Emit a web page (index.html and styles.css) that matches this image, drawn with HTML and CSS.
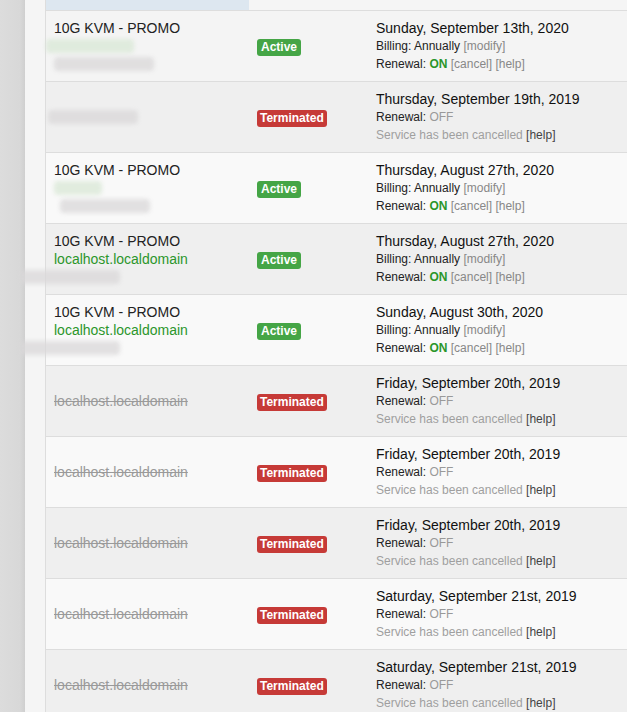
FILE: index.html
```html
<!DOCTYPE html>
<html>
<head>
<meta charset="utf-8">
<link rel="stylesheet" href="styles.css">
</head>
<body>
<div class="page">
  <div class="gutter"></div>
  <div class="side"></div>
  <div class="table">
    <div class="head"><div class="hcell"></div><div></div><div></div></div>

    <div class="row odd first">
      <div class="cell name">
        <div class="title">10G KVM - PROMO</div>
        <div class="line"><span class="blob green w88"></span></div>
        <div class="line"><span class="blob grey w100"></span></div>
      </div>
      <div class="cell status"><span class="badge active">Active</span></div>
      <div class="cell info">
        <div class="date">Sunday, September 13th, 2020</div>
        <div class="small">Billing: Annually <span class="lnk">[modify]</span></div>
        <div class="small">Renewal: <b class="on">ON</b> <span class="lnk">[cancel]</span> <span class="lnk">[help]</span></div>
      </div>
    </div>

    <div class="row even">
      <div class="cell name"><span class="blob grey w90"></span></div>
      <div class="cell status"><span class="badge term">Terminated</span></div>
      <div class="cell info">
        <div class="date">Thursday, September 19th, 2019</div>
        <div class="small">Renewal: <span class="off">OFF</span></div>
        <div class="small"><span class="muted">Service has been cancelled</span> <span class="help">[help]</span></div>
      </div>
    </div>

    <div class="row odd">
      <div class="cell name">
        <div class="title">10G KVM - PROMO</div>
        <div class="line"><span class="blob green w50"></span></div>
        <div class="line"><span class="blob grey w90 ind"></span></div>
      </div>
      <div class="cell status"><span class="badge active">Active</span></div>
      <div class="cell info">
        <div class="date">Thursday, August 27th, 2020</div>
        <div class="small">Billing: Annually <span class="lnk">[modify]</span></div>
        <div class="small">Renewal: <b class="on">ON</b> <span class="lnk">[cancel]</span> <span class="lnk">[help]</span></div>
      </div>
    </div>

    <div class="row even">
      <div class="cell name">
        <div class="title">10G KVM - PROMO</div>
        <div class="domain">localhost.localdomain</div>
        <div class="line"><span class="blob grey w70 out"></span></div>
      </div>
      <div class="cell status"><span class="badge active">Active</span></div>
      <div class="cell info">
        <div class="date">Thursday, August 27th, 2020</div>
        <div class="small">Billing: Annually <span class="lnk">[modify]</span></div>
        <div class="small">Renewal: <b class="on">ON</b> <span class="lnk">[cancel]</span> <span class="lnk">[help]</span></div>
      </div>
    </div>

    <div class="row odd">
      <div class="cell name">
        <div class="title">10G KVM - PROMO</div>
        <div class="domain">localhost.localdomain</div>
        <div class="line"><span class="blob grey w100 out"></span></div>
      </div>
      <div class="cell status"><span class="badge active">Active</span></div>
      <div class="cell info">
        <div class="date">Sunday, August 30th, 2020</div>
        <div class="small">Billing: Annually <span class="lnk">[modify]</span></div>
        <div class="small">Renewal: <b class="on">ON</b> <span class="lnk">[cancel]</span> <span class="lnk">[help]</span></div>
      </div>
    </div>

    <div class="row even">
      <div class="cell name"><span class="strike">localhost.localdomain</span></div>
      <div class="cell status"><span class="badge term">Terminated</span></div>
      <div class="cell info">
        <div class="date">Friday, September 20th, 2019</div>
        <div class="small">Renewal: <span class="off">OFF</span></div>
        <div class="small"><span class="muted">Service has been cancelled</span> <span class="help">[help]</span></div>
      </div>
    </div>

    <div class="row odd">
      <div class="cell name"><span class="strike">localhost.localdomain</span></div>
      <div class="cell status"><span class="badge term">Terminated</span></div>
      <div class="cell info">
        <div class="date">Friday, September 20th, 2019</div>
        <div class="small">Renewal: <span class="off">OFF</span></div>
        <div class="small"><span class="muted">Service has been cancelled</span> <span class="help">[help]</span></div>
      </div>
    </div>

    <div class="row even">
      <div class="cell name"><span class="strike">localhost.localdomain</span></div>
      <div class="cell status"><span class="badge term">Terminated</span></div>
      <div class="cell info">
        <div class="date">Friday, September 20th, 2019</div>
        <div class="small">Renewal: <span class="off">OFF</span></div>
        <div class="small"><span class="muted">Service has been cancelled</span> <span class="help">[help]</span></div>
      </div>
    </div>

    <div class="row odd">
      <div class="cell name"><span class="strike">localhost.localdomain</span></div>
      <div class="cell status"><span class="badge term">Terminated</span></div>
      <div class="cell info">
        <div class="date">Saturday, September 21st, 2019</div>
        <div class="small">Renewal: <span class="off">OFF</span></div>
        <div class="small"><span class="muted">Service has been cancelled</span> <span class="help">[help]</span></div>
      </div>
    </div>

    <div class="row even">
      <div class="cell name"><span class="strike">localhost.localdomain</span></div>
      <div class="cell status"><span class="badge term">Terminated</span></div>
      <div class="cell info">
        <div class="date">Saturday, September 21st, 2019</div>
        <div class="small">Renewal: <span class="off">OFF</span></div>
        <div class="small"><span class="muted">Service has been cancelled</span> <span class="help">[help]</span></div>
      </div>
    </div>
  </div>
</div>
</body>
</html>
```

FILE: styles.css
```css
html, body {
  margin: 0;
  padding: 0;
  overflow: hidden;
  background: #f5f5f5;
  font-family: "Liberation Sans", Arial, sans-serif;
}

.page {
  display: flex;
  min-height: 712px;
}

.gutter {
  width: 25px;
  flex: none;
  background: linear-gradient(to right, #dcdcdc 0%, #d8d8d8 80%, #cfcfcf 100%);
}

.side {
  width: 20px;
  flex: none;
  background: #f5f5f5;
}

.table {
  flex: 1;
  border-left: 1px solid #dddddd;
  background: #f9f9f9;
}

.head {
  display: grid;
  grid-template-columns: 203px 119px 1fr;
  height: 10px;
  background: #f5f5f5;
}

.hcell {
  background: #dde7f0;
}

.row {
  display: grid;
  grid-template-columns: 203px 119px 1fr;
  border-top: 1px solid #dddddd;
}

.row.odd { background: #f9f9f9; }
.row.even { background: #efefef; }
.row.first { background: #f4f4f4; }

.cell {
  padding: 8px;
  display: flex;
  flex-direction: column;
  justify-content: center;
  min-height: 54px;
}

.name { font-size: 14px; line-height: 18px; color: #222; }

.title { height: 18px; }

.domain { height: 18px; color: #2b962b; }

.line { height: 18px; display: flex; align-items: center; }

.blob {
  display: block;
  height: 14px;
  border-radius: 4px;
  filter: blur(2px);
  opacity: 0.75;
}

.blob.green { background: #d9e8d6; }
.blob.grey { background: #dad8d9; }
.w50 { width: 48px; }
.w70 { width: 100px; }
.w88 { width: 88px; margin-left: -8px; }
.w90 { width: 90px; margin-left: -6px; }
.w100 { width: 100px; }
.ind { margin-left: 6px; }
.out { margin-left: -34px; }

.strike {
  color: #9a9a9a;
  text-decoration: line-through;
}

.status { align-items: flex-start; }

.badge {
  display: inline-block;
  font-size: 12px;
  font-weight: bold;
  line-height: 12px;
  padding: 2px 4px 3px;
  margin-top: 2px;
  border-radius: 3px;
  color: #ffffff;
}

.badge.active { background: #45a546; }
.badge.term { background: #c63a37; padding: 2px 3px 3px; }

.info { color: #111; }

.date { font-size: 14px; line-height: 18px; }

.small { font-size: 12px; line-height: 18px; color: #222; }

.lnk { color: #888; }

.on { color: #2a962a; font-weight: bold; }

.off { color: #999; }

.muted { color: #9f9f9f; }

.help { color: #444; }
```
